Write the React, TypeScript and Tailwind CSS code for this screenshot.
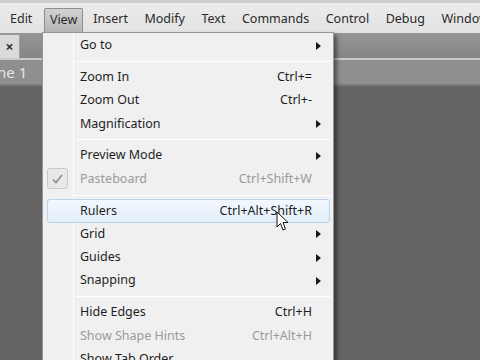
import React from 'react';

type Item =
  | { kind: 'sep' }
  | { kind: 'item'; label: string; shortcut?: string; sub?: boolean; disabled?: boolean; checked?: boolean; hot?: boolean };

const MENU_BAR = ['Edit', 'View', 'Insert', 'Modify', 'Text', 'Commands', 'Control', 'Debug', 'Window'];

const ITEMS: Item[] = [
  { kind: 'item', label: 'Go to', sub: true },
  { kind: 'sep' },
  { kind: 'item', label: 'Zoom In', shortcut: 'Ctrl+=' },
  { kind: 'item', label: 'Zoom Out', shortcut: 'Ctrl+-' },
  { kind: 'item', label: 'Magnification', sub: true },
  { kind: 'sep' },
  { kind: 'item', label: 'Preview Mode', sub: true },
  { kind: 'item', label: 'Pasteboard', shortcut: 'Ctrl+Shift+W', disabled: true, checked: true },
  { kind: 'sep' },
  { kind: 'item', label: 'Rulers', shortcut: 'Ctrl+Alt+Shift+R', hot: true },
  { kind: 'item', label: 'Grid', sub: true },
  { kind: 'item', label: 'Guides', sub: true },
  { kind: 'item', label: 'Snapping', sub: true },
  { kind: 'sep' },
  { kind: 'item', label: 'Hide Edges', shortcut: 'Ctrl+H' },
  { kind: 'item', label: 'Show Shape Hints', shortcut: 'Ctrl+Alt+H', disabled: true },
  { kind: 'item', label: 'Show Tab Order' },
];

const SubArrow = () => (
  <svg width="5" height="8" viewBox="0 0 5 8" className="absolute right-[12px] top-1/2 -translate-y-1/2">
    <path d="M0 0 L5 4 L0 8 Z" fill="#1a1a1a" />
  </svg>
);

const MenuRow: React.FC<{ item: Extract<Item, { kind: 'item' }> }> = ({ item }) => {
  const text = item.disabled ? 'text-[#9a9a9a]' : 'text-[#1e1e1e]';
  return (
    <div className="relative h-[23.3px] flex items-center">
      {item.hot && (
        <div className="absolute left-[4px] right-[3px] top-0 bottom-0 rounded-[3px] border border-[#b7d3ee] bg-gradient-to-b from-[#f2f8fd] to-[#e3eefa]" />
      )}
      {item.checked && (
        <div className="absolute left-[4px] top-[1px] w-[21px] h-[21px] rounded-[3px] border border-[#c9c9c9] bg-[#e8e8e8] flex items-center justify-center">
          <svg width="11" height="10" viewBox="0 0 11 10">
            <path d="M1 5.5 L4 8.5 L10 1" fill="none" stroke="#8c8c8c" strokeWidth="1.6" />
          </svg>
        </div>
      )}
      <span className={`relative ml-[37px] ${text}`}>{item.label}</span>
      {item.shortcut && <span className={`relative ml-auto mr-[21px] ${text}`}>{item.shortcut}</span>}
      {item.sub && <SubArrow />}
    </div>
  );
};

export default function App() {
  return (
    <div
      className="relative w-[480px] h-[360px] overflow-hidden bg-[#656565] text-[12.5px]"
      style={{ fontFamily: '"Noto Sans", "Open Sans", sans-serif' }}
    >
      {/* Menu bar */}
      <div className="h-[33px] border-t-[3px] border-[#cfcfcf] bg-gradient-to-b from-[#ececec] to-[#e2e2e2] flex items-end pl-[10px] text-[#2a2a2a]">
        {MENU_BAR.map((m) =>
          m === 'View' ? (
            <div
              key={m}
              className="h-[25px] mr-[10px] -ml-[5px] px-[5px] flex items-center pb-[2px] rounded-t-[2px] border border-b-0 border-[#8d8d8d] bg-gradient-to-b from-[#d2d2d2] to-[#b4b4b4]"
            >
              {m}
            </div>
          ) : (
            <div key={m} className="h-[25px] flex items-center pb-[2px] mr-[16.5px]">
              {m}
            </div>
          ),
        )}
      </div>

      {/* Tab bar */}
      <div className="h-[25px] bg-gradient-to-b from-[#969696] to-[#858585] flex items-end">
        <div className="w-[20px] h-[23px] bg-[#dadada] border-r border-[#a0a0a0] flex items-center justify-center text-[#333] font-bold text-[14px]">
          ×
        </div>
      </div>
      <div className="h-[2px] bg-[#c9c9c9]" />
      <div className="h-[24px] bg-[#8f8f8f] flex items-center text-[#e6e6e6] text-[15px] -ml-[3px]">ne 1</div>
      <div className="h-[2px] bg-[#7a7a7a]" />

      {/* Dropdown */}
      <div className="absolute left-[42px] top-[32px] w-[292px] h-[340px] bg-[#f0f0f0] border border-[#979797] shadow-[3px_3px_4px_rgba(0,0,0,0.45)] pt-[1px]">
        <div className="absolute left-[30px] top-0 bottom-0 w-px bg-[#e2e2e2] border-r border-white" />
        {ITEMS.map((it, i) =>
          it.kind === 'sep' ? (
            <div key={i} className="relative h-[8.5px] flex items-center pl-[32px] pr-[2px]">
              <div className="w-full h-px bg-[#dcdcdc] border-b border-white" />
            </div>
          ) : (
            <MenuRow key={i} item={it} />
          ),
        )}
      </div>

      {/* Mouse cursor */}
      <svg width="13" height="21" viewBox="0 0 13 21" className="absolute left-[276px] top-[211px]">
        <path d="M1 1 L1 16 L4.5 12.5 L7 19 L9.5 18 L7 11.5 L12 11.5 Z" fill="#fff" stroke="#111" strokeWidth="1" strokeLinejoin="round" />
      </svg>
    </div>
  );
}
